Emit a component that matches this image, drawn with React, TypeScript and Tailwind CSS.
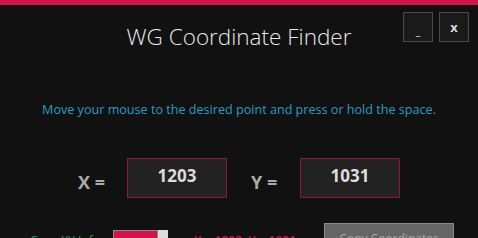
export default function App() {
  return (
    <div className="w-[478px] h-[238px] overflow-hidden bg-[#111111] flex flex-col font-['Open_Sans',sans-serif]">
      <div className="h-[5px] bg-[#cf1548] shrink-0" />

      {/* header */}
      <div className="grid grid-cols-[1fr_auto_1fr] h-[52px] shrink-0">
        <div />
        <h1 className="pt-[17px] text-[22.5px] font-light leading-[30px] text-[#e8e8e8] font-['Segoe_UI','Open_Sans',sans-serif]">
          WG Coordinate Finder
        </h1>
        <div className="flex justify-end gap-[6px] pt-[7px] pr-[9px]">
          <button className="w-[30px] h-[30px] border border-[#4a4a4a] bg-[#1a1a1a] text-[#cfcfcf] text-[11px] font-bold leading-none pt-[6px]">
            _
          </button>
          <button className="w-[30px] h-[30px] border border-[#4a4a4a] bg-[#1a1a1a] text-[#d8d8d8] text-[13px] font-bold leading-none">
            x
          </button>
        </div>
      </div>

      {/* instructions */}
      <p className="mt-[44px] text-center text-[12.6px] leading-[18px] text-[#2b9cc6]">
        Move your mouse to the desired point and press or hold the space.
      </p>

      {/* coordinates */}
      <div className="mt-[39px] flex items-center pl-[78px]">
        <span className="text-[18px] font-bold text-[#ababab] pt-[8px] w-[49px]">X =</span>
        <div className="w-[100px] h-[40px] border border-[#8c1a3c] bg-[#222222] flex justify-center pt-[5px]">
          <span className="text-[17px] font-bold leading-[24px] text-[#dcdcdc]">1203</span>
        </div>
        <span className="ml-[24px] text-[18px] font-bold text-[#ababab] pt-[8px] w-[49px]">Y =</span>
        <div className="w-[100px] h-[40px] border border-[#8c1a3c] bg-[#222222] flex justify-center pt-[5px]">
          <span className="text-[17px] font-bold leading-[24px] text-[#dcdcdc]">1031</span>
        </div>
      </div>

      {/* bottom row */}
      <div className="mt-[25px] flex items-start">
        <span className="ml-[30px] mt-[10px] text-[12px] leading-[16px] text-[#2e9a5e]">Copy XY Info</span>
        <div className="ml-[13px] mt-[7px] flex">
          <div className="w-[45px] h-[20px] border border-[#8a8a8a] bg-[#d2144a]" />
          <div className="w-[10px] h-[20px] bg-[#dcdcdc]" />
        </div>
        <span className="ml-[26px] mt-[10px] text-[12px] leading-[16px] font-semibold text-[#c8164a]">
          X = 1203, Y = 1031
        </span>
        <button className="ml-auto mr-[24px] w-[130px] h-[30px] border border-[#8a8a8a] bg-[#666666] text-[12px] text-[#a8a8a8] pt-[2px] text-center">
          Copy Coordinates
        </button>
      </div>
    </div>
  )
}
